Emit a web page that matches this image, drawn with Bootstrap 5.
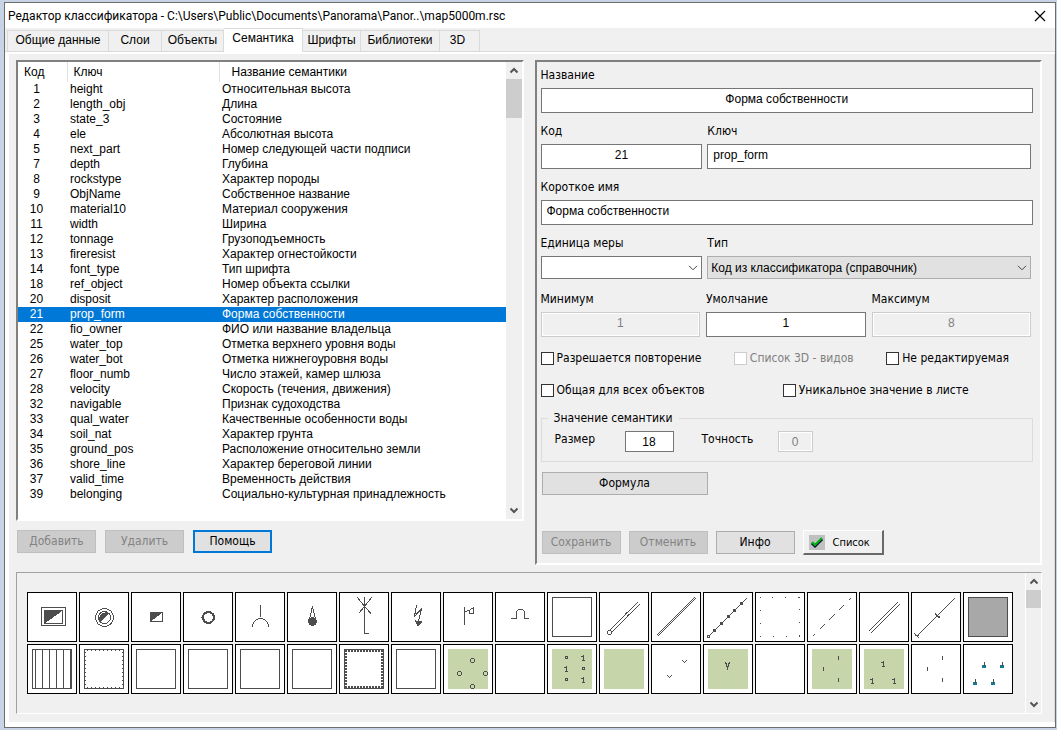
<!DOCTYPE html>
<html lang="ru">
<head>
<meta charset="utf-8">
<meta name="viewport" content="width=device-width, initial-scale=1">
<title>Редактор классификатора</title>
<link href="https://cdn.jsdelivr.net/npm/bootstrap@5.3.0/dist/css/bootstrap.min.css" rel="stylesheet">
<style>
  :root { --face: #f0f0f0; --ink: #4d4d4d; --ui: "DejaVu Sans Condensed", "Noto Sans", sans-serif; --grid: "Liberation Sans", sans-serif; }
  body { background: #c8d3e5; color: #000; padding: 2px 1px 1px 4px; font: 12px/15px var(--ui); }
  button, input, select { font: inherit; color: inherit; }
  .window { background: #fff; border: 1px solid #6b6f6b; padding-bottom: 1px; }
  .titlebar { height: 25px; padding: 0 9px 0 3px; font: 12px/24px Roboto, sans-serif; }
  .titlebar h1 { font: inherit; }
  .close-btn { width: 12px; height: 12px; }

  /* tabs */
  .nav-tabs { background: var(--face); padding: 2px 2px 0; border-bottom: 1px solid #dadada; height: 24px; font: 12px/19px var(--grid); }
  .nav-tabs .nav-link { color: #000; background: var(--face); border: 1px solid #dadada; border-left-width: 0; border-radius: 0; padding: 0; height: 22px; margin: 0; text-align: center; }
  .nav-tabs .nav-item:first-child .nav-link { border-left-width: 1px; }
  .nav-tabs .nav-link.active { background: #fff; border-color: #dadada #dadada #fff; height: 24px; margin-top: -2px; padding-bottom: 2px; }
  .w-a { width: 102px; } .w-b { width: 53px; } .w-c { width: 62px; } .w-d { width: 79px; } .w-e { width: 58px; } .w-f { width: 40px; }

  .tab-body { border: solid #fff; border-width: 2px 0 4px 4px; box-shadow: inset -1px 0 #dadada; background: var(--face); padding: 6px 13px 8px 7px; }
  .halves { display: grid; grid-template-columns: 1fr 1fr; gap: 11px; }
  .sunken { border: 2px solid; border-color: #808080 #fff #fff #808080; }

  /* list of semantics */
  .listbox { background: #fff; height: 461px; }
  .list-area { overflow: hidden; }
  .list-buttons { gap: 9px; padding: 9px 0 0 1px; }
  .sem { width: 100%; font: 12px/15px var(--grid); table-layout: fixed; }
  .sem th { font-weight: 400; height: 20px; padding: 0 0 0 6px; border-left: 1px solid #e0e0e0; white-space: nowrap; }
  .sem th:first-child { border: 0; }
  .sem th:last-child { padding-left: 12px; }
  .sem td { padding: 0 0 0 3px; white-space: nowrap; }
  .sem td:first-child { padding: 0 12px 0 0; text-align: center; }
  .sem .picked { background: #0078d7; color: #fff; }
  .c-code { width: 49px; } .c-key { width: 152px; }

  .scroller { width: 16px; background: var(--face); flex: none; }
  .scroller svg { display: block; margin: 0 auto; width: 16px; height: 17px; fill: none; stroke: #555; stroke-width: 2; }
  .thumb { background: #cdcdcd; }

  /* buttons */
  .btn-w { width: 79px; height: 23px; padding: 0; border: 1px solid #adadad; border-radius: 0; background: #e1e1e1; color: #000; font: 12px/21px var(--ui); }
  .btn-w:hover { background: #e5f1fb; }
  .btn-w:disabled { background: #ccc; border-color: #bfbfbf; color: #838383; opacity: 1; }
  .btn-focus { border: 2px solid #0078d7; line-height: 19px; }
  .btn-wide { width: 166px; margin: 10px 0 35px 1px; }
  .btn-raised { width: 81px; height: 25px; border: solid; border-width: 1px 2px 2px 1px; border-color: #fff #696969 #696969 #fff; background: var(--face); font-size: 11px; }
  .tick-box { width: 16px; height: 15px; background: #c0c0c0; margin: 0 8px 0 5px; }

  /* properties */
  .props { padding: 4px 7px 8px 4px; }
  .fld label { display: block; height: 18px; line-height: 18px; margin-bottom: 4px; }
  .props .form-control { height: 25px; padding: 0 5px 3px; border: 1px solid #767676; border-radius: 0; background: #fff; color: #000; font: 12px/20px var(--grid); }
  .props .form-control:disabled { background: var(--face); border-color: #ccc; color: #808080; box-shadow: inset 0 0 0 1px #fff; }
  .props .form-select { height: 23px; margin-bottom: 2px; padding: 0 20px 0 3px; border: 1px solid #767676; border-radius: 0; background-color: #fff; color: #000; font: 12px/20px var(--grid);
    background-image: url("data:image/svg+xml,%3csvg xmlns='http://www.w3.org/2000/svg' viewBox='0 0 10 6'%3e%3cpath fill='none' stroke='%23444' d='M1 .8 5 4.8 9 .8'/%3e%3c/svg%3e"); background-size: 10px 6px; background-position: right 3px center; }
  .props .form-select.flat { background-color: #e1e1e1; border-color: #adadad; }
  .rows { display: grid; gap: 9px; margin-bottom: 5px; }
  .two { display: grid; grid-template-columns: 1fr 2fr; gap: 5px; padding-right: 2px; }
  .three { display: grid; grid-template-columns: 1fr 1fr 1fr; gap: 6px; padding-right: 2px; }
  .checks { height: 32px; }
  .chk { display: flex; align-items: center; gap: 3px; white-space: nowrap; }
  .chk .form-check-input { width: 13px; height: 13px; margin: 0; border: 1px solid #333; border-radius: 0; background-color: #fff; }
  .chk .form-check-input:disabled { border-color: #ccc; opacity: 1; }
  .chk:has(:disabled) { color: #808080; }
  .chk .form-check-input:disabled ~ label { opacity: 1; }
  .group { border: 1px solid #dcdcdc; height: 51px; padding: 0 13px; margin-top: 5px; }
  .group legend { float: none; width: auto; font: inherit; line-height: 15px; margin: 0 0 0 -7px; padding: 0 6px; }
  .group .form-control { height: 21px; padding: 0; }
  .group-line { padding-top: 5px; }
  .group-line label { margin-bottom: 4px; }
  .sz { width: 70px; }
  .pr { width: 80px; }

  /* symbol palette */
  .palette { margin-top: 7px; border: 1px solid; border-color: #a0a0a0 #fff #fff #a0a0a0; height: 142px; }
  .symbols { gap: 2px; padding: 19px 10px; }
  .sym { width: 50px; height: 50px; padding: 0; border: 0; background: #fff; }
  .sym svg { display: block; shape-rendering: crispEdges; fill: none; stroke: var(--ink); }
  .frame { stroke: #000; }
  .solid { fill: var(--ink); }
  .green { fill: #c7d5aa; stroke: none; }
  .teal { fill: #187890; stroke: none; }
</style>
</head>
<body>
<svg class="d-none">
  <symbol id="up" viewBox="0 0 16 17"><path d="M4.500 10.500 8 7l3.500 3.500"/></symbol>
  <symbol id="down" viewBox="0 0 16 17"><path d="M4.500 6.500 8 10l3.500-3.500"/></symbol>
  <symbol id="one" viewBox="0 0 4 6"><path d="M0 1.500H2M2.500 0V6M1 5.500H4"/></symbol>
  <symbol id="reed" viewBox="0 0 4 6"><path class="teal" d="M0 3H4V6H0Z"/><path d="M2.500 0V4"/></symbol>
</svg>
<div class="window">
  <header class="titlebar d-flex align-items-center justify-content-between">
    <h1 class="m-0">Редактор классификатора - C:\Users\Public\Documents\Panorama\Panor..\map5000m.rsc</h1>
    <button class="close-btn border-0 bg-transparent p-0 d-flex" aria-label="Закрыть"><svg width="12" height="12" viewBox="0 0 12 12"><path d="M1 1 11 11M11 1 1 11" stroke="#000" stroke-width="1.200"/></svg></button>
  </header>
  <ul class="nav nav-tabs flex-nowrap">
    <li class="nav-item"><a class="nav-link w-a" href="#">Общие данные</a></li>
    <li class="nav-item"><a class="nav-link w-b" href="#">Слои</a></li>
    <li class="nav-item"><a class="nav-link w-c" href="#">Объекты</a></li>
    <li class="nav-item"><a class="nav-link w-d active" href="#" aria-current="page">Семантика</a></li>
    <li class="nav-item"><a class="nav-link w-e" href="#">Шрифты</a></li>
    <li class="nav-item"><a class="nav-link w-d" href="#">Библиотеки</a></li>
    <li class="nav-item"><a class="nav-link w-f pe-1" href="#">3D</a></li>
  </ul>

  <main class="tab-body">
    <div class="halves">
      <section>
        <div class="listbox sunken d-flex">
          <div class="list-area flex-grow-1">
            <table class="sem">
              <colgroup><col class="c-code"><col class="c-key"><col></colgroup>
              <thead><tr><th>Код</th><th>Ключ</th><th>Название семантики</th></tr></thead>
              <tbody>
                <tr><td>1</td><td>height</td><td>Относительная высота</td></tr>
                <tr><td>2</td><td>length_obj</td><td>Длина</td></tr>
                <tr><td>3</td><td>state_3</td><td>Состояние</td></tr>
                <tr><td>4</td><td>ele</td><td>Абсолютная высота</td></tr>
                <tr><td>5</td><td>next_part</td><td>Номер следующей части подписи</td></tr>
                <tr><td>7</td><td>depth</td><td>Глубина</td></tr>
                <tr><td>8</td><td>rockstype</td><td>Характер породы</td></tr>
                <tr><td>9</td><td>ObjName</td><td>Собственное название</td></tr>
                <tr><td>10</td><td>material10</td><td>Материал сооружения</td></tr>
                <tr><td>11</td><td>width</td><td>Ширина</td></tr>
                <tr><td>12</td><td>tonnage</td><td>Грузоподъемность</td></tr>
                <tr><td>13</td><td>fireresist</td><td>Характер огнестойкости</td></tr>
                <tr><td>14</td><td>font_type</td><td>Тип шрифта</td></tr>
                <tr><td>18</td><td>ref_object</td><td>Номер объекта ссылки</td></tr>
                <tr><td>20</td><td>disposit</td><td>Характер расположения</td></tr>
                <tr class="picked"><td>21</td><td>prop_form</td><td>Форма собственности</td></tr>
                <tr><td>22</td><td>fio_owner</td><td>ФИО или название владельца</td></tr>
                <tr><td>25</td><td>water_top</td><td>Отметка верхнего уровня воды</td></tr>
                <tr><td>26</td><td>water_bot</td><td>Отметка нижнегоуровня воды</td></tr>
                <tr><td>27</td><td>floor_numb</td><td>Число этажей, камер шлюза</td></tr>
                <tr><td>28</td><td>velocity</td><td>Скорость (течения, движения)</td></tr>
                <tr><td>32</td><td>navigable</td><td>Признак судоходства</td></tr>
                <tr><td>33</td><td>qual_water</td><td>Качественные особенности воды</td></tr>
                <tr><td>34</td><td>soil_nat</td><td>Характер грунта</td></tr>
                <tr><td>35</td><td>ground_pos</td><td>Расположение относительно земли</td></tr>
                <tr><td>36</td><td>shore_line</td><td>Характер береговой линии</td></tr>
                <tr><td>37</td><td>valid_time</td><td>Временность действия</td></tr>
                <tr><td>39</td><td>belonging</td><td>Социально-культурная принадлежность</td></tr>
              </tbody>
            </table>
          </div>
          <div class="scroller d-flex flex-column">
            <svg><use href="#up"/></svg>
            <div class="thumb" style="height:39px"></div>
            <svg class="mt-auto"><use href="#down"/></svg>
          </div>
        </div>
        <div class="list-buttons d-flex">
          <button class="btn btn-w" disabled>Добавить</button>
          <button class="btn btn-w" disabled>Удалить</button>
          <button class="btn btn-w btn-focus">Помощь</button>
        </div>
      </section>

      <form class="props sunken d-flex flex-column">
        <div class="rows">
          <div class="fld"><label for="f-name">Название</label><input id="f-name" class="form-control text-center" value="Форма собственности"></div>
          <div class="two">
            <div class="fld"><label for="f-code">Код</label><input id="f-code" class="form-control text-center" value="21"></div>
            <div class="fld"><label for="f-key">Ключ</label><input id="f-key" class="form-control" value="prop_form"></div>
          </div>
          <div class="fld"><label for="f-short">Короткое имя</label><input id="f-short" class="form-control" value="Форма собственности"></div>
          <div class="two">
            <div class="fld"><label for="f-unit">Единица меры</label><select id="f-unit" class="form-select"><option></option></select></div>
            <div class="fld"><label for="f-type">Тип</label><select id="f-type" class="form-select flat"><option>Код из классификатора (справочник)</option></select></div>
          </div>
          <div class="three">
            <div class="fld"><label for="f-min">Минимум</label><input id="f-min" class="form-control text-center" value="1" disabled></div>
            <div class="fld"><label for="f-def">Умолчание</label><input id="f-def" class="form-control text-center" value="1"></div>
            <div class="fld"><label for="f-max">Максимум</label><input id="f-max" class="form-control text-center" value="8" disabled></div>
          </div>
        </div>
        <div class="checks d-flex justify-content-between align-items-center pe-4">
          <div class="chk"><input class="form-check-input" type="checkbox" id="k1"><label for="k1">Разрешается повторение</label></div>
          <div class="chk"><input class="form-check-input" type="checkbox" id="k2" disabled><label for="k2">Список 3D - видов</label></div>
          <div class="chk"><input class="form-check-input" type="checkbox" id="k3"><label for="k3">Не редактируемая</label></div>
        </div>
        <div class="checks row g-0 align-items-center pe-2">
          <div class="col-6 chk"><input class="form-check-input" type="checkbox" id="k4"><label for="k4">Общая для всех объектов</label></div>
          <div class="col-6 chk"><input class="form-check-input" type="checkbox" id="k5"><label for="k5">Уникальное значение в листе</label></div>
        </div>
        <fieldset class="group">
          <legend>Значение семантики</legend>
          <div class="group-line d-flex align-items-center">
            <label class="sz" for="f-size">Размер</label><input id="f-size" class="form-control text-center" style="width:49px" value="18">
            <label class="pr ms-4 ps-1" for="f-prec">Точность</label><input id="f-prec" class="form-control text-center" style="width:35px" value="0" disabled>
          </div>
        </fieldset>
        <button type="button" class="btn btn-w btn-wide">Формула</button>
        <div class="d-flex gap-2 align-items-center mt-auto" style="margin-left:1px">
          <button type="button" class="btn btn-w" disabled>Сохранить</button>
          <button type="button" class="btn btn-w" disabled>Отменить</button>
          <button type="button" class="btn btn-w">Инфо</button>
          <button type="button" class="btn btn-w btn-raised d-flex align-items-center"><svg class="tick-box" viewBox="0 0 16 15"><path d="M3 7 6 10 13 3" fill="none" stroke="#003" stroke-width="3" transform="translate(0 1)"/><path d="M3 7 6 10 13 3" fill="none" stroke="#0b1" stroke-width="2"/></svg>Список</button>
        </div>
      </form>
    </div>

    <section class="palette d-flex">
      <div class="symbols d-flex flex-wrap align-content-start flex-grow-1">
        <button class="sym" aria-label="1"><svg width="50" height="50"><path class="frame" d="M.5.5h49v49H.5Z"/><path d="M14.500 15.500h24v18h-24ZM17.500 18.500h18v13h-18Z"/><path class="solid" d="M17.500 31V18.500H35Z"/></svg></button>
        <button class="sym" aria-label="2"><svg width="50" height="50"><path class="frame" d="M.5.5h49v49H.5Z"/><circle cx="25.500" cy="25.500" r="9"/><circle cx="25.500" cy="25.500" r="6"/><path class="solid" d="M21.500 29.500A6 6 0 0 1 29.500 21.500Z"/></svg></button>
        <button class="sym" aria-label="3"><svg width="50" height="50"><path class="frame" d="M.5.5h49v49H.5Z"/><path d="M19.500 20.500h12v9h-12Z"/><path class="solid" d="M19.500 29V20.500H31Z"/></svg></button>
        <button class="sym" aria-label="4"><svg width="50" height="50"><path class="frame" d="M.5.5h49v49H.5Z"/><circle cx="25.500" cy="25.500" r="5.500" stroke-width="2"/><path d="M18 25.500h2"/></svg></button>
        <button class="sym" aria-label="5"><svg width="50" height="50"><path class="frame" d="M.5.5h49v49H.5Z"/><path d="M25.500 13V25M17.500 35A8 8.500 0 0 1 33.500 35"/></svg></button>
        <button class="sym" aria-label="6"><svg width="50" height="50"><path class="frame" d="M.5.5h49v49H.5Z"/><path d="M22.500 27 25.500 14.500 28.500 27"/><circle class="solid" cx="25.500" cy="29.500" r="4"/></svg></button>
        <button class="sym" aria-label="7"><svg width="50" height="50"><path class="frame" d="M.5.5h49v49H.5Z"/><path d="M25.500 5V41.500H30M18.500 5.500 25.500 14.500 32 21.500M32.500 5.500 25.500 14.500 19.500 21.500"/></svg></button>
        <button class="sym" aria-label="8"><svg width="50" height="50"><path class="frame" d="M.5.5h49v49H.5Z"/><path d="M25.500 13 23.500 24.500 30.500 16.500 27.500 29"/><path class="solid" d="M24.500 29 30.500 30 27 34Z"/></svg></button>
        <button class="sym" aria-label="9"><svg width="50" height="50"><path class="frame" d="M.5.5h49v49H.5Z"/><path d="M21.500 15V33M21.500 19.500 26 18.500 30.500 15.500V21.500H27L26 18.500"/></svg></button>
        <button class="sym" aria-label="10"><svg width="50" height="50"><path class="frame" d="M.5.5h49v49H.5Z"/><path d="M16 26.500H21.500V21A4 4 0 0 1 29.500 21V26.500H34"/></svg></button>
        <button class="sym" aria-label="11"><svg width="50" height="50"><path class="frame" d="M.5.5h49v49H.5Z"/><path d="M5.500 5.500h39v39h-39Z"/></svg></button>
        <button class="sym" aria-label="12"><svg width="50" height="50"><path class="frame" d="M.5.5h49v49H.5Z"/><path d="M9.500 39.500 38.500 10.500M11.500 41.500 40.500 12.500M26 22.500 28 20.500M28 24 30 22"/><circle cx="10.500" cy="40.500" r="2"/></svg></button>
        <button class="sym" aria-label="13"><svg width="50" height="50"><path class="frame" d="M.5.5h49v49H.5Z"/><path d="M5.500 43.500 43.500 5.500M6.500 44.500 44.500 6.500"/></svg></button>
        <button class="sym" aria-label="14"><svg width="50" height="50"><path class="frame" d="M.5.5h49v49H.5Z"/><path d="M5.500 44.500 43.500 6.500"/><g><circle cx="5.500" cy="44.500" r="1"/><circle cx="11.500" cy="38.500" r="1"/><circle cx="18.500" cy="31.500" r="1"/><circle cx="25.500" cy="24.500" r="1"/><circle cx="31.500" cy="18.500" r="1"/><circle cx="38.500" cy="11.500" r="1"/></g></svg></button>
        <button class="sym" aria-label="15"><svg width="50" height="50"><path class="frame" d="M.5.5h49v49H.5Z"/><path d="M5 5.500h1M17 5.500h1M30 5.500h1M43 5.500h2M5 18.500h1M5 31.500h1M5 44.500h1M18 44.500h1M31 44.500h1M44 17.500h1M44 30.500h1M44.500 43v2"/></svg></button>
        <button class="sym" aria-label="16"><svg width="50" height="50"><path class="frame" d="M.5.5h49v49H.5Z"/><path d="M5.500 44.500 7.500 42.500M12.500 37.500 17.500 32.500M21.500 28.500 27.500 22.500M31.500 18.500 36.500 13.500M41.500 8.500 43.500 6.500"/></svg></button>
        <button class="sym" aria-label="17"><svg width="50" height="50"><path class="frame" d="M.5.5h49v49H.5Z"/><path d="M9.500 39.500 38.500 10.500M11.500 41.500 40.500 12.500"/></svg></button>
        <button class="sym" aria-label="18"><svg width="50" height="50"><path class="frame" d="M.5.5h49v49H.5Z"/><path d="M6.500 43.500 43.500 6.500M3.500 41.500 8.500 46.500M4 43.500H8M24 21.500 28.500 26M24.500 24.500H29"/></svg></button>
        <button class="sym" aria-label="19"><svg width="50" height="50"><path class="frame" d="M.5.5h49v49H.5Z"/><path fill="#a8a8a8" d="M5.500 5.500h39v39h-39Z"/></svg></button>

        <button class="sym" aria-label="20"><svg width="50" height="50"><path class="frame" d="M.5.5h49v49H.5Z"/><path d="M5.500 5.500h39v39h-39ZM8.500 5v40M15.500 5v40M22.500 5v40M29.500 5v40M36.500 5v40M43.500 5v40"/></svg></button>
        <button class="sym" aria-label="21"><svg width="50" height="50"><path class="frame" d="M.5.5h49v49H.5Z"/><path d="M5.500 5.500h39v39h-39Z"/><path stroke-dasharray="1 3" d="M8 6.500H43M6.500 8V43M8 43.500H43M43 8V43"/></svg></button>
        <button class="sym" aria-label="22"><svg width="50" height="50"><path class="frame" d="M.5.5h49v49H.5Z"/><path d="M5.500 5.500h39v39h-39Z"/></svg></button>
        <button class="sym" aria-label="23"><svg width="50" height="50"><path class="frame" d="M.5.5h49v49H.5Z"/><path d="M5.500 5.500h39v39h-39Z"/></svg></button>
        <button class="sym" aria-label="24"><svg width="50" height="50"><path class="frame" d="M.5.5h49v49H.5Z"/><path d="M5.500 5.500h39v39h-39Z"/></svg></button>
        <button class="sym" aria-label="25"><svg width="50" height="50"><path class="frame" d="M.5.5h49v49H.5Z"/><path d="M5.500 5.500h39v39h-39Z"/></svg></button>
        <button class="sym" aria-label="26"><svg width="50" height="50"><path class="frame" d="M.5.5h49v49H.5Z"/><path d="M5.500 5.500h39v39h-39Z"/><path stroke-dasharray="2 1" stroke-width="2" d="M6 7H44M7 6V44M6 43H44M43 6V44"/></svg></button>
        <button class="sym" aria-label="27"><svg width="50" height="50"><path class="frame" d="M.5.5h49v49H.5Z"/><path d="M5.500 5.500h39v39h-39Z"/></svg></button>
        <button class="sym" aria-label="28"><svg width="50" height="50"><path class="frame" d="M.5.5h49v49H.5Z"/><path class="green" d="M5 5h40v40H5Z"/><circle cx="29.500" cy="16.500" r="2"/><circle cx="16.500" cy="29.500" r="2"/><circle cx="42.500" cy="29.500" r="2"/><circle cx="29.500" cy="42.500" r="2"/></svg></button>
        <button class="sym" aria-label="29"><svg width="50" height="50"><path class="frame" d="M.5.5h49v49H.5Z"/></svg></button>
        <button class="sym" aria-label="30"><svg width="50" height="50"><path class="frame" d="M.5.5h49v49H.5Z"/><path class="green" d="M5 5h40v40H5Z"/><circle cx="19.500" cy="13.500" r="1"/><circle cx="36.500" cy="24.500" r="1"/><circle cx="19.500" cy="35.500" r="1"/><use href="#one" x="34" y="11" width="4" height="6"/><use href="#one" x="17" y="22" width="4" height="6"/><use href="#one" x="34" y="33" width="4" height="6"/></svg></button>
        <button class="sym" aria-label="31"><svg width="50" height="50"><path class="frame" d="M.5.5h49v49H.5Z"/><path class="green" d="M5 5h40v40H5Z"/></svg></button>
        <button class="sym" aria-label="32"><svg width="50" height="50"><path class="frame" d="M.5.5h49v49H.5Z"/><path d="M31.500 16.500 33.500 18.500 35.500 16.500M16.500 31.500 18.500 33.500 20.500 31.500"/></svg></button>
        <button class="sym" aria-label="33"><svg width="50" height="50"><path class="frame" d="M.5.5h49v49H.5Z"/><path class="green" d="M5 5h40v40H5Z"/><path d="M22.500 18 24.500 24 26.500 18"/></svg></button>
        <button class="sym" aria-label="34"><svg width="50" height="50"><path class="frame" d="M.5.5h49v49H.5Z"/></svg></button>
        <button class="sym" aria-label="35"><svg width="50" height="50"><path class="frame" d="M.5.5h49v49H.5Z"/><path class="green" d="M5 5h40v40H5Z"/><path d="M31.500 12v4M16.500 23v4M31.500 34v4"/></svg></button>
        <button class="sym" aria-label="36"><svg width="50" height="50"><path class="frame" d="M.5.5h49v49H.5Z"/><path class="green" d="M5 5h40v40H5Z"/><use href="#one" x="22" y="17" width="4" height="6"/><use href="#one" x="11" y="34" width="4" height="6"/><use href="#one" x="33" y="34" width="4" height="6"/></svg></button>
        <button class="sym" aria-label="37"><svg width="50" height="50"><path class="frame" d="M.5.5h49v49H.5Z"/><path d="M31.500 12v4M16.500 23v4M31.500 34v4"/></svg></button>
        <button class="sym" aria-label="38"><svg width="50" height="50"><path class="frame" d="M.5.5h49v49H.5Z"/><use href="#reed" x="19" y="18" width="4" height="6"/><use href="#reed" x="37" y="18" width="4" height="6"/><use href="#reed" x="10" y="35" width="4" height="6"/><use href="#reed" x="28" y="35" width="4" height="6"/></svg></button>
      </div>
      <div class="scroller d-flex flex-column border-start border-white">
        <svg><use href="#up"/></svg>
        <div class="thumb" style="height:18px"></div>
        <svg class="mt-auto"><use href="#down"/></svg>
      </div>
    </section>
  </main>
</div>
<script src="https://cdn.jsdelivr.net/npm/bootstrap@5.3.0/dist/js/bootstrap.bundle.min.js"></script>
</body>
</html>
